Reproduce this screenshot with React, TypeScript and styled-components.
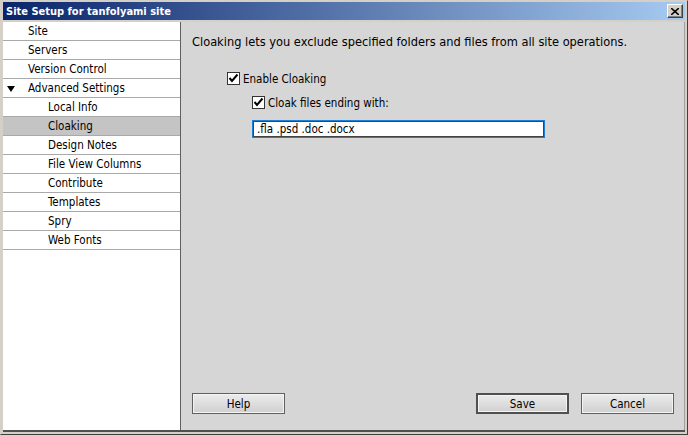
import React from "react";
import styled, { createGlobalStyle } from "styled-components";

const Global = createGlobalStyle`
  html, body { margin: 0; padding: 0; background: #d4d0c8; }
  body { font-family: "DejaVu Sans Condensed", "DejaVu Sans", sans-serif; font-stretch: condensed; }
  * { box-sizing: border-box; }
`;

const Window = styled.div`
  width: 688px;
  height: 435px;
  background: #d4d0c8;
  border-top: 1px solid #d4d0c8;
  border-left: 1px solid #d4d0c8;
  border-right: 1px solid #404040;
  border-bottom: 1px solid #404040;
  padding: 1px 2px 2px 2px;
  display: flex;
  flex-direction: column;
`;

const TitleBar = styled.div`
  height: 18px;
  background: linear-gradient(to right, #0a246a, #a6caf0);
  display: flex;
  align-items: center;
  justify-content: space-between;
  padding: 0 2px 0 3px;
`;

const Title = styled.span`
  color: #fff;
  font-weight: bold;
  font-size: 11px;
`;

const CloseBtn = styled.div`
  width: 16px;
  height: 14px;
  background: #d4d0c8;
  border-top: 1px solid #fff;
  border-left: 1px solid #fff;
  border-right: 1px solid #404040;
  border-bottom: 1px solid #404040;
  box-shadow: inset -1px -1px 0 #808080;
  display: flex;
  align-items: center;
  justify-content: center;
`;

const Body = styled.div`
  flex: 1;
  display: flex;
  border-bottom: 2px solid #505050;
  margin-top: 2px;
`;

const Sidebar = styled.div`
  width: 178px;
  background: #fff;
  border-right: 1px solid #606060;
  display: flex;
  flex-direction: column;
`;

const Row = styled.div<{ $indent: number; $selected?: boolean }>`
  height: 19px;
  border-bottom: 1px solid #a9a9a9;
  background: ${(p) => (p.$selected ? "#c4c4c4" : "#fff")};
  display: flex;
  align-items: center;
  padding-left: ${(p) => p.$indent}px;
  font-size: 11.5px;
  color: #000;
  position: relative;
`;

const Arrow = styled.span`
  position: absolute;
  left: 4px;
  top: 7px;
  width: 0;
  height: 0;
  border-left: 4px solid transparent;
  border-right: 4px solid transparent;
  border-top: 6px solid #000;
`;

const Main = styled.div`
  flex: 1;
  background: #d6d6d6;
  display: flex;
  flex-direction: column;
  padding: 12px 10px 16px 11px;
  border-right: 1px solid #a0a0a0;
`;

const Intro = styled.div`
  font-size: 12.7px;
  color: #000;
  line-height: 15px;
`;

const CheckRow = styled.label<{ $indent: number; $top: number }>`
  display: flex;
  align-items: center;
  gap: 3px;
  margin-left: ${(p) => p.$indent}px;
  margin-top: ${(p) => p.$top}px;
  font-size: 11.5px;
  height: 13px;
`;

const Box = styled.span`
  width: 13px;
  height: 13px;
  background: #fff;
  border: 1px solid #333;
  display: flex;
  align-items: center;
  justify-content: center;
`;

const Field = styled.div`
  margin-left: 60px;
  margin-top: 11px;
  width: 293px;
  height: 18px;
  background: #fff;
  border: 1px solid #1e7fd6;
  box-shadow: inset 0 0 0 1px #444;
  font-size: 11.5px;
  display: flex;
  align-items: center;
  padding-left: 4px;
`;

const Spacer = styled.div`
  flex: 1;
`;

const ButtonBar = styled.div`
  display: flex;
  align-items: center;
  gap: 12px;
`;

const Button = styled.div<{ $default?: boolean }>`
  width: 93px;
  height: 21px;
  border: ${(p) => (p.$default ? "2px solid #505050" : "1px solid #606060")};
  background: linear-gradient(#ececec, #d0d0d0);
  box-shadow: inset 0 0 0 1px #f4f4f4;
  display: flex;
  align-items: center;
  justify-content: center;
  font-size: 11.5px;
  color: #000;
`;

const Check = () => (
  <svg width="11" height="11" viewBox="0 0 11 11">
    <path d="M1.5 5 L4 8 L9.5 1.5" stroke="#000" strokeWidth="2" fill="none" />
  </svg>
);

const items: { label: string; indent: number; selected?: boolean; arrow?: boolean }[] = [
  { label: "Site", indent: 25 },
  { label: "Servers", indent: 25 },
  { label: "Version Control", indent: 25 },
  { label: "Advanced Settings", indent: 25, arrow: true },
  { label: "Local Info", indent: 45 },
  { label: "Cloaking", indent: 45, selected: true },
  { label: "Design Notes", indent: 45 },
  { label: "File View Columns", indent: 45 },
  { label: "Contribute", indent: 45 },
  { label: "Templates", indent: 45 },
  { label: "Spry", indent: 45 },
  { label: "Web Fonts", indent: 45 },
];

export default function App() {
  return (
    <>
      <Global />
      <Window>
        <TitleBar>
          <Title>Site Setup for tanfolyami site</Title>
          <CloseBtn>
            <svg width="8" height="7" viewBox="0 0 8 7">
              <path d="M0 0 L8 7 M8 0 L0 7" stroke="#000" strokeWidth="1.6" />
            </svg>
          </CloseBtn>
        </TitleBar>
        <Body>
          <Sidebar>
            {items.map((it) => (
              <Row key={it.label} $indent={it.indent} $selected={it.selected}>
                {it.arrow && <Arrow />}
                {it.label}
              </Row>
            ))}
          </Sidebar>
          <Main>
            <Intro>Cloaking lets you exclude specified folders and files from all site operations.</Intro>
            <CheckRow $indent={35} $top={23}>
              <Box><Check /></Box>
              Enable Cloaking
            </CheckRow>
            <CheckRow $indent={60} $top={11}>
              <Box><Check /></Box>
              Cloak files ending with:
            </CheckRow>
            <Field>.fla .psd .doc .docx</Field>
            <Spacer />
            <ButtonBar>
              <Button>Help</Button>
              <Spacer />
              <Button $default>Save</Button>
              <Button>Cancel</Button>
            </ButtonBar>
          </Main>
        </Body>
      </Window>
    </>
  );
}
